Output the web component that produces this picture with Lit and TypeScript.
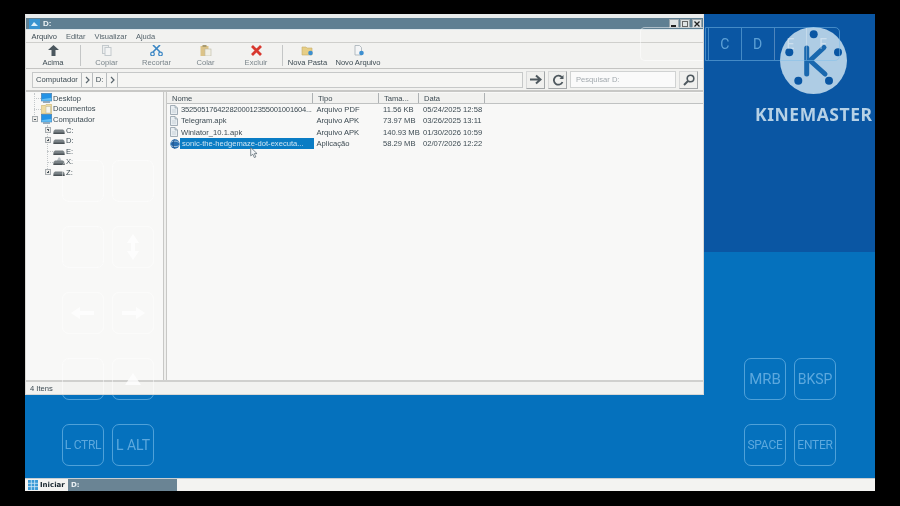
import { LitElement, html, css, svg } from "lit";
import { customElement } from "lit/decorators.js";

const fileIcon = svg`<svg class="ficon" viewBox="0 0 8 10" width="8" height="10"><path d="M.5.5h4.500l2.500 2.500v6.500h-7z" fill="#e9eef2" stroke="#9aa6b0" stroke-width=".9"/><path d="M5 .5v2.500h2.500" fill="#c4ced6" stroke="#9aa6b0" stroke-width=".7"/><path d="M2 5h4M2 7h4" stroke="#bcc6ce" stroke-width=".7"/></svg>`;
const globeIcon = svg`<svg class="ficon" viewBox="0 0 10 10" width="10" height="10"><circle cx="5" cy="5" r="4.700" fill="#2a6fb0"/><path d="M.5 3.500c3-2 6-2 9 .5M.5 6.500c3 1.500 6 1.500 9 0" stroke="#bcd6ea" stroke-width=".8" fill="none"/><path d="M4.500.5c-2 3-2 6 0 9" stroke="#1b3f70" stroke-width=".7" fill="none"/></svg>`;
const driveIcon = (top = false) => svg`<svg viewBox="0 0 12 9" width="12" height="9">${top ? svg`<path d="M3.500 4.500l2-4h1.500l2 4z" fill="#b8bfc4"/>` : ""}<path d="M.5 5l1.500-1.500h8L11.500 5v3H.5z" fill="#7a8286"/><path d="M.5 6.500h11V8H.5z" fill="#4b5256"/></svg>`;
const monitor = svg`<svg viewBox="0 0 11 10" width="11" height="10"><rect x=".3" y=".3" width="10.400" height="7.700" fill="#2393e6" stroke="#4a7ca8" stroke-width=".6"/><path d="M.6 6.300l9.800-1.500v3H.6z" fill="#63bdf2"/><rect x="2" y="8.300" width="7" height="1.500" fill="#7d97ac"/></svg>`;
const docs = svg`<svg viewBox="0 0 11 10" width="11" height="10"><path d="M.3 1.500h4l.7-1h5.700v9H.3z" fill="#efdca0" stroke="#c6ae6c" stroke-width=".6"/><rect x="5" y="2.500" width="4.500" height="6.500" fill="#f6f6ee" stroke="#b8b49a" stroke-width=".5"/></svg>`;
const ghostArrows: Record<string, unknown> = {
  "87,226": svg`<svg width="14" height="26" viewBox="0 0 14 26"><path d="M7 0l6 9H9v8h4l-6 9-6-9h4V9H1z" fill="#fff"/></svg>`,
  "37,292": svg`<svg width="24" height="14" viewBox="0 0 24 14"><path d="M0 7l9-6v4h14v4H9v4z" fill="#fff"/></svg>`,
  "87,292": svg`<svg width="24" height="14" viewBox="0 0 24 14"><path d="M24 7l-9-6v4H1v4h14v4z" fill="#fff"/></svg>`,
  "87,358": svg`<svg width="18" height="12" viewBox="0 0 18 12"><path d="M9 0l8 12H1z" fill="#fff"/></svg>`,
};

@customElement("app-root")
export class AppRoot extends LitElement {
  static styles = css`
    :host { display: block; width: 900px; height: 506px; background: #000; overflow: hidden; font-family: "Liberation Sans", Arial, sans-serif; }
    .screen { position: relative; margin-left: 25px; width: 850px; height: 506px; padding-top: 14px; box-sizing: border-box; display: flex; flex-direction: column; filter: blur(.35px); }
    .band-top { height: 238px; background: #0a56a3; }
    .band-bottom { height: 226px; background: #0571bd; }
    .taskbar { height: 13px; background: #f3f3f1; display: flex; align-items: stretch; border-top: 1px solid #c8ced2; box-sizing: border-box; }
    .start { width: 43px; display: flex; align-items: center; gap: 2px; padding-left: 3px; font: bold 7px "DejaVu Sans", sans-serif; color: #16242c; box-sizing: border-box; }
    .taskitem { width: 109px; background: #6a8494; color: #e8eef2; font: bold 7px "DejaVu Sans", sans-serif; display: flex; align-items: center; padding-left: 3px; box-sizing: border-box; }

    .window { position: absolute; left: 0; top: 14px; width: 679px; height: 381px; background: #f2f2f0; border: 1px solid #d8d8d6; border-top: 4px solid #e9ecec; box-sizing: border-box; display: flex; flex-direction: column; font-size: 7.600px; color: #3c4a52; overflow: hidden; }
    .title { height: 12px; flex: none; background: #5f7f92; border-bottom: 1px solid #dfe8ec; display: flex; align-items: center; padding-left: 3px; color: #eef3f5; font-size: 8px; font-weight: bold; box-sizing: border-box; }
    .title .app { margin-right: 3px; }
    .title .sp { flex: 1; }
    .wbtn { width: 10px; height: 9px; background: #dfe3e4; border: 1px solid #9aa6ac; box-sizing: border-box; display: flex; align-items: center; justify-content: center; margin-right: 1.500px; }
    .menu { height: 13px; flex: none; display: flex; gap: 9px; padding-left: 5.500px; align-items: center; font-size: 7.500px; border-bottom: 1px solid #cfcfcc; box-sizing: border-box; }
    .menu span:nth-child(n+2) { color: #56646c; }
    .toolbar { height: 26px; flex: none; display: flex; align-items: stretch; border-bottom: 1px solid #c4c4c2; box-sizing: border-box; }
    .tool { display: flex; flex-direction: column; align-items: center; justify-content: flex-start; padding-top: 2px; gap: 2px; color: #7a858b; box-sizing: border-box; }
    .tool svg { height: 11px; width: 13px; }
    .tool.on { color: #3c4a52; }
    .vsep { width: 1px; margin: 2px 0; background: #c4c6c6; flex: none; }
    .address { height: 23px; flex: none; display: flex; align-items: center; padding: 0 1px 0 6px; border-bottom: 2px solid #c8c8c6; box-sizing: border-box; }
    .crumbs { width: 491px; height: 16px; background: #f5f5f3; border: 1px solid #c6c8c8; box-sizing: border-box; display: flex; align-items: stretch; }
    .crumb { display: flex; align-items: center; justify-content: center; border-right: 1px solid #b8bcbe; box-sizing: border-box; color: #3c4a52; }
    .sqbtn { width: 19px; height: 18px; margin-left: 3px; background: #f0f0ee; border: 1px solid #d8d9d9; border-right-color: #a2a6a8; border-bottom-color: #a2a6a8; box-sizing: border-box; display: flex; align-items: center; justify-content: center; }
    .search { width: 106px; height: 17px; margin-left: 3px; background: #fafafa; border: 1px solid #d0d2d2; box-sizing: border-box; display: flex; align-items: center; padding-left: 5px; color: #a2a9ae; }
    .panes { flex: 1; min-height: 0; display: flex; background: #f8f8f7; }
    .tree { width: 138px; flex: none; padding: 1px 0 0 5px; box-sizing: border-box; border-right: 1px solid #c8c8c6; position: relative; }
    .vline { position: absolute; width: 0; border-left: 1px dotted #c4c8ca; }
    .tnode { height: 10.600px; display: flex; align-items: center; gap: 1px; position: relative; }
    .tnode.l1 { padding-left: 10px; }
    .tnode.l2 { padding-left: 22px; }
    .tnode svg { flex: none; position: relative; }
    .stub { position: absolute; height: 0; top: 5px; border-top: 1px dotted #c4c8ca; }
    .pm { width: 6px; height: 6px; border: 1px solid #a8adb0; background: #ecebe8; box-sizing: border-box; position: absolute; top: 2px; font-size: 0; }
    .pm::before { content: ""; position: absolute; left: 1px; right: 1px; top: 1.500px; height: 1px; background: #46525a; }
    .pm.plus::after { content: ""; position: absolute; top: 1px; bottom: 1px; left: 1.500px; width: 1px; background: #46525a; }
    .gutter { width: 3px; flex: none; background: #efefed; border-right: 1px solid #c8c8c6; box-sizing: border-box; }
    .list { flex: 1; min-width: 0; display: flex; flex-direction: column; padding-top: 1px; }
    .header { height: 11px; flex: none; display: flex; align-items: stretch; background: #f1f1ef; border-bottom: 1px solid #c0c2c2; box-sizing: border-box; }
    .header div { display: flex; align-items: center; padding-left: 5px; border-right: 1px solid #aeb2b4; box-sizing: border-box; }
    .header .end { flex: 1; border-right: none; }
    .row { display: flex; height: 11.300px; align-items: center; white-space: nowrap; }
    .c1 { width: 146px; } .c2 { width: 66px; } .c3 { width: 40px; } .c4 { width: 66px; }
    .row .c1 { display: flex; align-items: center; gap: 1px; padding-left: 3px; box-sizing: border-box; }
    .row .c1 .ficon { flex: none; }
    .row .c1 > span { padding-left: 2px; }
    .row .c2 { padding-left: 3.500px; box-sizing: border-box; }
    .row .c3 { padding-left: 4px; box-sizing: border-box; }
    .row .c4 { padding-left: 4px; box-sizing: border-box; }
    .tight { letter-spacing: -.19px; }
    .row .sel { background: #0a7cc4; color: #cfe6f4; display: block; width: 134px; height: 11px; line-height: 11px; margin-left: -1px; padding-left: 2px; box-sizing: border-box; overflow: hidden; flex: none; }
    .status { height: 14px; flex: none; border-top: 2px solid #d0d0ce; display: flex; align-items: center; padding-left: 4px; box-sizing: border-box; background: #f2f2f0; }
    .ghost { position: absolute; width: 42px; height: 42px; border: 1.500px solid rgba(255,255,255,.6); border-radius: 7px; box-sizing: border-box; display: flex; align-items: center; justify-content: center; opacity: .8; }
    .wghost { position: absolute; left: 614px; top: 9px; width: 64px; height: 34px; border: 1px solid rgba(255,255,255,.5); border-right: none; border-radius: 5px 0 0 5px; box-sizing: border-box; }

    .key { position: absolute; width: 42px; height: 42px; border: 1.500px solid rgba(126,190,234,.62); border-radius: 7px; box-sizing: border-box; display: flex; align-items: center; justify-content: center; color: rgba(126,190,234,.72); font: 14px Roboto, sans-serif; white-space: nowrap; }
    .key.sm { font-size: 12px; letter-spacing: -.25px; }
    .key.lg { font-size: 15px; }
    .fkeys { position: absolute; left: 680px; top: 27px; width: 135px; height: 34px; border: 1px solid rgba(126,190,234,.5); border-radius: 0 5px 5px 0; box-sizing: border-box; display: flex; padding-left: 2px; }
    .fkeys span { width: 33px; display: flex; align-items: center; justify-content: center; border-left: 1px solid rgba(126,190,234,.5); color: rgba(126,190,234,.72); font: 14px Roboto, sans-serif; box-sizing: border-box; }
    .fkeys span.over { color: rgba(255,255,255,.38); border-left-color: rgba(255,255,255,.28); }
    .logo { position: absolute; left: 755px; top: 27px; width: 67px; height: 67px; }
    .wordmark { position: absolute; left: 730px; top: 104px; font: 700 17.500px "Noto Sans", sans-serif; letter-spacing: .55px; color: #b6d1e6; white-space: nowrap; line-height: 20px; }
    .cursor { position: absolute; left: 225px; top: 147px; }
  `;

  private tool(label: string, w: number, icon: unknown, on = false) {
    return html`<div class="tool ${on ? "on" : ""}" style="width:${w}px">${icon}<span>${label}</span></div>`;
  }

  render() {
    const up = svg`<svg viewBox="0 0 13 11"><path d="M6.500 0L12 5H8.500v6h-4V5H1z" fill="#4b575e"/></svg>`;
    const copy = svg`<svg viewBox="0 0 13 11"><rect x="2.500" y=".5" width="6" height="8" fill="#eceeee" stroke="#c4cacd"/><rect x="5" y="2.500" width="6" height="8" fill="#f3f4f4" stroke="#c4cacd"/></svg>`;
    const cut = svg`<svg viewBox="0 0 13 11"><path d="M3 0l7 7M10 0L3 7" stroke="#3a86c4" stroke-width="1.600"/><circle cx="2.500" cy="9" r="1.800" fill="none" stroke="#3a86c4" stroke-width="1.200"/><circle cx="10.500" cy="9" r="1.800" fill="none" stroke="#3a86c4" stroke-width="1.200"/></svg>`;
    const paste = svg`<svg viewBox="0 0 13 11"><rect x="1.500" y="1" width="8" height="10" fill="#dcc388"/><rect x="3.500" y="0" width="4" height="2" fill="#a89a70"/><rect x="6" y="4" width="6" height="7" fill="#f1efe4" stroke="#bdb9a5" stroke-width=".6"/></svg>`;
    const del = svg`<svg viewBox="0 0 13 11"><path d="M2 1l9 9M11 1l-9 9" stroke="#d8382f" stroke-width="2.800"/></svg>`;
    const newFolder = svg`<svg viewBox="0 0 13 11"><path d="M1 2h4l1 1h5v7H1z" fill="#e6ce86" stroke="#c7ad66" stroke-width=".6"/><circle cx="9.500" cy="8" r="2.300" fill="#3d8fd0"/></svg>`;
    const newFile = svg`<svg viewBox="0 0 13 11"><path d="M3 .5h4.500l2 2V10H3z" fill="#f4f5f6" stroke="#a5aeb5" stroke-width=".8"/><circle cx="9.500" cy="8" r="2.300" fill="#3d8fd0"/></svg>`;
    const chev = svg`<svg width="5" height="8"><path d="M1 1l3 3-3 3" fill="none" stroke="#5a666d" stroke-width="1.200"/></svg>`;
    const keys: [string, number, number, string][] = [
      ["L CTRL", 37, 424, "sm"], ["L ALT", 87, 424, ""], ["MRB", 719, 358, "lg"], ["BKSP", 769, 358, ""],
      ["SPACE", 719, 424, "sm"], ["ENTER", 769, 424, "sm"],
    ];
    return html`
      <div class="screen">
        <div class="band-top"></div>
        <div class="band-bottom"></div>
        <div class="taskbar">
          <div class="start">
            <svg viewBox="0 0 10 10" width="10" height="10"><rect width="10" height="10" fill="#3a9ad6"/><path d="M3.300 0v10M6.600 0v10M0 3.300h10M0 6.600h10" stroke="#cfe8f8" stroke-width=".8"/></svg>
            <span>Iniciar</span>
          </div>
          <div class="taskitem">D:</div>
        </div>

        ${keys.map(([t, x, y, c]) => html`<div class="key ${c}" style="left:${x}px;top:${y}px">${t}</div>`)}
        <div class="key" style="left:37px;top:358px"></div>
        <div class="key" style="left:87px;top:358px"></div>

        <svg class="logo" viewBox="0 0 67 67">
          <circle cx="33.500" cy="33.500" r="33.500" fill="#aecce4"/>
          ${[[33.700, 7.300], [9.300, 25.300], [58, 25.300], [18.300, 53.700], [49, 53.700]].map(([x, y]) => svg`<circle cx=${x} cy=${y} r="4" fill="#0a56a3"/>`)}
          <path d="M26.700 21v26" stroke="#1a68ae" stroke-width="5" stroke-linecap="round"/>
          <path d="M44 20.500L30 33.500l15 13.500" fill="none" stroke="#1a68ae" stroke-width="5" stroke-linecap="round" stroke-linejoin="round"/>
        </svg>
        <div class="fkeys"><span>C</span><span>D</span><span class="over">E</span><span class="over">F</span></div>
        <div class="wordmark">KINEMASTER</div>

        <div class="window">
          <div class="title">
            <svg class="app" viewBox="0 0 11 10" width="11" height="10"><rect width="11" height="10" fill="#3a94d0"/><path d="M2 7l3-4 4 4z" fill="#dff0fa"/></svg>
            <span>D:</span><span class="sp"></span>
            <div class="wbtn"><svg width="6" height="6"><rect x="0" y="4" width="5" height="2" fill="#222"/></svg></div>
            <div class="wbtn"><svg width="6" height="6"><rect x=".5" y=".5" width="5" height="5" fill="none" stroke="#666"/></svg></div>
            <div class="wbtn"><svg width="6" height="6"><path d="M.5.5l5 5M5.500.5l-5 5" stroke="#222" stroke-width="1.300"/></svg></div>
          </div>
          <div class="menu"><span>Arquivo</span><span>Editar</span><span>Visualizar</span><span>Ajuda</span></div>
          <div class="toolbar">
            ${this.tool("Acima", 54, up, true)}<div class="vsep"></div>
            ${this.tool("Copiar", 51, copy)}${this.tool("Recortar", 49, cut)}${this.tool("Colar", 49, paste)}${this.tool("Excluir", 52, del)}
            <div class="vsep"></div>
            ${this.tool("Nova Pasta", 49, newFolder, true)}${this.tool("Novo Arquivo", 52, newFile, true)}
          </div>
          <div class="address">
            <div class="crumbs">
              <div class="crumb" style="width:49px">Computador</div>
              <div class="crumb" style="width:11px">${chev}</div>
              <div class="crumb" style="width:14px">D:</div>
              <div class="crumb" style="width:11px">${chev}</div>
            </div>
            <div class="sqbtn"><svg width="12" height="11"><path d="M0 5.500h9M6 1.500l4.500 4-4.500 4" fill="none" stroke="#4e585e" stroke-width="2"/></svg></div>
            <div class="sqbtn"><svg width="12" height="12"><path d="M10 3.500A4.500 4.500 0 1 0 10.500 8" fill="none" stroke="#4e585e" stroke-width="1.800"/><path d="M11.500 1v4h-4z" fill="#4e585e"/></svg></div>
            <div class="search">Pesquisar D:</div>
            <div class="sqbtn"><svg width="12" height="12"><circle cx="7.500" cy="4.500" r="3.300" fill="none" stroke="#4e585e" stroke-width="1.600"/><path d="M5 7l-4 4" stroke="#4e585e" stroke-width="2"/></svg></div>
          </div>
          <div class="panes">
            <div class="tree">
              <span class="vline" style="left:8px;top:1px;height:26px"></span>
              <span class="vline" style="left:21px;top:33px;height:46px"></span>
              <div class="tnode l1"><span class="stub" style="left:3px;width:7px"></span>${monitor}<span>Desktop</span></div>
              <div class="tnode l1"><span class="stub" style="left:3px;width:7px"></span>${docs}<span>Documentos</span></div>
              <div class="tnode l1"><span class="pm" style="left:1px"></span>${monitor}<span>Computador</span></div>
              <div class="tnode l2"><span class="pm plus" style="left:14px"></span>${driveIcon()}<span>C:</span></div>
              <div class="tnode l2"><span class="pm plus" style="left:14px"></span>${driveIcon()}<span>D:</span></div>
              <div class="tnode l2"><span class="stub" style="left:16px;width:6px"></span>${driveIcon()}<span>E:</span></div>
              <div class="tnode l2"><span class="stub" style="left:16px;width:6px"></span>${driveIcon(true)}<span>X:</span></div>
              <div class="tnode l2"><span class="pm plus" style="left:14px"></span>${driveIcon()}<span>Z:</span></div>
            </div>
            <div class="gutter"></div>
            <div class="list">
              <div class="header"><div class="c1">Nome</div><div class="c2">Tipo</div><div class="c3">Tama...</div><div class="c4">Data</div><div class="end"></div></div>
              <div class="row"><div class="c1">${fileIcon}<span class="tight">3525051764228200012355001001604...</span></div><div class="c2">Arquivo PDF</div><div class="c3">11.56 KB</div><div class="c4">05/24/2025 12:58</div></div>
              <div class="row"><div class="c1">${fileIcon}<span>Telegram.apk</span></div><div class="c2">Arquivo APK</div><div class="c3">73.97 MB</div><div class="c4">03/26/2025 13:11</div></div>
              <div class="row"><div class="c1">${fileIcon}<span>Winlator_10.1.apk</span></div><div class="c2">Arquivo APK</div><div class="c3">140.93 MB</div><div class="c4">01/30/2026 10:59</div></div>
              <div class="row"><div class="c1">${globeIcon}<span class="sel">sonic-the-hedgemaze-dot-executa...</span></div><div class="c2">Aplicação</div><div class="c3">58.29 MB</div><div class="c4">02/07/2026 12:22</div></div>
            </div>
          </div>
          <div class="status">4 Itens</div>
          ${[[37, 160], [87, 160], [37, 226], [87, 226], [37, 292], [87, 292], [37, 358], [87, 358]].map(
            ([x, y]) => html`<div class="ghost" style="left:${x - 1}px;top:${y - 18}px">${ghostArrows[`${x},${y}`] ?? ""}</div>`
          )}
          <div class="wghost"></div>
        </div>

        <svg class="cursor" width="9" height="11" viewBox="0 0 10 13"><path d="M.5.5v10l2.500-2 1.800 4 1.800-.8-1.800-3.900h3.200z" fill="#f4f6f8" stroke="#4a5a64" stroke-width=".8"/></svg>
      </div>
    `;
  }
}
